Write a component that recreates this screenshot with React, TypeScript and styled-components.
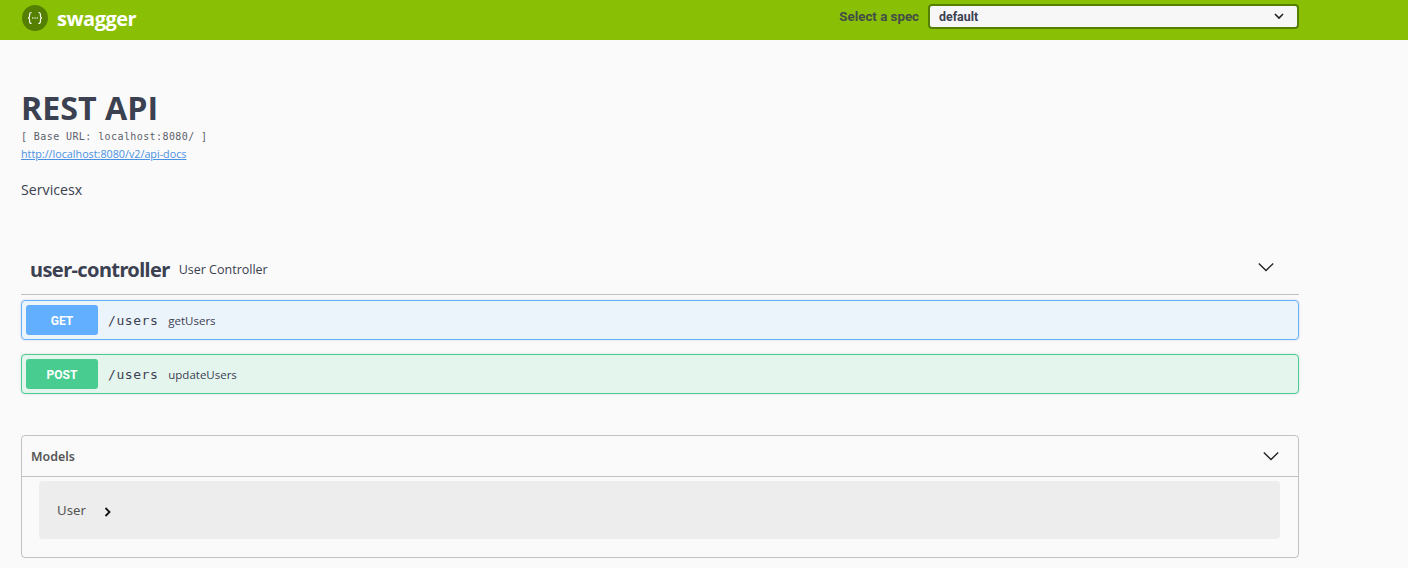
import styled, { createGlobalStyle } from 'styled-components';

const GlobalStyle = createGlobalStyle`
  html, body {
    margin: 0;
    padding: 0;
    background: #fafafa;
    overflow: hidden;
  }
  * {
    box-sizing: border-box;
  }
`;

const Page = styled.div`
  height: 568px;
  overflow: hidden;
  font-family: "Open Sans", sans-serif;
  color: #3b4151;
`;

const Topbar = styled.div`
  height: 40px;
  background: #89bf04;
  padding: 0 109px 0 22px;
  display: flex;
  align-items: center;
  justify-content: space-between;
`;

const Brand = styled.div`
  display: flex;
  align-items: center;
  gap: 9px;
  margin-top: -4px;
`;

const BrandName = styled.span`
  font-family: "Open Sans", sans-serif;
  font-size: 20px;
  font-weight: 700;
  letter-spacing: -0.5px;
  color: #fff;
`;

const SpecPicker = styled.div`
  display: flex;
  align-items: center;
  gap: 9px;
  margin-top: -7px;
`;

const SpecLabel = styled.span`
  font-family: Roboto, sans-serif;
  font-size: 13.3px;
  font-weight: 700;
  color: #3b4151;
  opacity: 0.9;
`;

const SpecSelect = styled.div`
  width: 371px;
  height: 25px;
  background: #f7f7f7;
  border: 2px solid #547f00;
  border-radius: 4px;
  padding: 0 13px 0 9px;
  display: flex;
  align-items: center;
  justify-content: space-between;
  font-family: Roboto, sans-serif;
  font-size: 12.4px;
  font-weight: 700;
`;

const Content = styled.div`
  width: 1278px;
  margin-left: 21px;
`;

const Info = styled.div`
  padding-top: 49px;
`;

const Title = styled.h1`
  margin: 0;
  font-size: 32.2px;
  line-height: 38px;
  font-weight: 700;
  color: #3b4151;
`;

const BaseUrl = styled.div`
  font-family: "DejaVu Sans Mono", monospace;
  font-size: 10px;
  line-height: 14px;
  letter-spacing: 0.41px;
  color: #5a5f6c;
  margin-top: 3px;
`;

const DocsLink = styled.a`
  display: block;
  font-size: 10.75px;
  line-height: 16px;
  margin-top: 2px;
  color: #4990e2;
  text-decoration: underline;
`;

const Description = styled.p`
  margin: 18px 0 0;
  font-size: 14.2px;
  line-height: 19px;
`;

const TagHeader = styled.div`
  margin-top: 47px;
  height: 49px;
  padding: 0 24px 2px 9px;
  border-bottom: 1px solid rgba(59, 65, 81, 0.3);
  display: flex;
  align-items: center;
  gap: 9px;
`;

const TagName = styled.span`
  font-family: "Noto Sans", sans-serif;
  font-size: 20px;
  font-weight: 700;
  letter-spacing: -0.6px;
`;

const TagDescription = styled.span`
  flex: 1;
  font-size: 12.5px;
  margin-top: 1px;
`;

const TagToggle = styled.span`
  display: flex;
  margin-top: -4px;
`;

const OpRow = styled.div<{ $border: string; $bg: string; $gap: number }>`
  height: 40px;
  margin-top: ${(p) => p.$gap}px;
  padding: 0 4px;
  display: flex;
  align-items: center;
  border: 1px solid ${(p) => p.$border};
  border-radius: 4px;
  background: ${(p) => p.$bg};
  box-shadow: 0 0 3px rgba(0, 0, 0, 0.12);
`;

const MethodBadge = styled.span<{ $color: string }>`
  width: 72px;
  height: 30px;
  padding-top: 1px;
  border-radius: 3px;
  background: ${(p) => p.$color};
  color: #fff;
  font-family: Roboto, sans-serif;
  font-size: 12px;
  font-weight: 700;
  display: flex;
  align-items: center;
  justify-content: center;
`;

const OpPath = styled.span`
  font-family: "DejaVu Sans Mono", monospace;
  font-size: 13px;
  padding-left: 10px;
  letter-spacing: 0.55px;
`;

const OpSummary = styled.span`
  font-size: 11.5px;
  padding-left: 10px;
`;

const ModelsBox = styled.div`
  margin-top: 41px;
  height: 123px;
  border: 1px solid rgba(59, 65, 81, 0.3);
  border-radius: 4px;
`;

const ModelsHeader = styled.div`
  height: 41px;
  padding: 0 18px 0 9px;
  border-bottom: 1px solid rgba(59, 65, 81, 0.3);
  display: flex;
  align-items: center;
  justify-content: space-between;
`;

const ModelsTitle = styled.span`
  font-family: "Noto Sans", sans-serif;
  font-size: 12.4px;
  font-weight: 600;
  color: #555;
`;

const ModelRow = styled.div`
  height: 58px;
  margin: 4px 18px 0 17px;
  padding: 0 18px;
  background: rgba(0, 0, 0, 0.05);
  border-radius: 4px;
  display: flex;
  align-items: center;
  gap: 18px;
`;

const ModelName = styled.span`
  font-family: "Noto Sans", sans-serif;
  font-size: 13.2px;
  color: #555;
`;

const ModelToggle = styled.span`
  display: flex;
  margin-top: 3px;
`;

const Chevron = ({ size }: { size: number }) => (
  <svg width={size} height={size} viewBox="0 0 20 20" fill="none" stroke="#222" strokeWidth="1.5">
    <path d="M2 6l8 8 8-8" />
  </svg>
);

const SmallChevronDown = () => (
  <svg width="10" height="7" viewBox="0 0 10 7" fill="none" stroke="#222" strokeWidth="1.6">
    <path d="M1 1l4 4 4-4" />
  </svg>
);

const SmallChevronRight = () => (
  <svg width="7" height="10" viewBox="0 0 7 10" fill="none" stroke="#111" strokeWidth="1.8">
    <path d="M1.5 1l4 4-4 4" />
  </svg>
);

const SwaggerLogo = () => (
  <svg width="26" height="26" viewBox="0 0 26 26">
    <circle cx="13" cy="13" r="13" fill="#547f00" />
    <g fill="none" stroke="#fff" strokeWidth="1.1">
      <path d="M9.6 7.5c-1.5 0-2 .7-2 2v1.8c0 1-.6 1.5-1.5 1.7.9.2 1.5.7 1.5 1.7v1.8c0 1.3.5 2 2 2" />
      <path d="M16.4 7.5c1.5 0 2 .7 2 2v1.8c0 1 .6 1.5 1.5 1.7-.9.2-1.5.7-1.5 1.7v1.8c0 1.3-.5 2-2 2" />
    </g>
    <g fill="#fff">
      <circle cx="10.8" cy="13" r=".7" />
      <circle cx="13" cy="13" r=".7" />
      <circle cx="15.2" cy="13" r=".7" />
    </g>
  </svg>
);

export default function App() {
  return (
    <Page>
      <GlobalStyle />
      <Topbar>
        <Brand>
          <SwaggerLogo />
          <BrandName>swagger</BrandName>
        </Brand>
        <SpecPicker>
          <SpecLabel>Select a spec</SpecLabel>
          <SpecSelect>
            default
            <SmallChevronDown />
          </SpecSelect>
        </SpecPicker>
      </Topbar>
      <Content>
        <Info>
          <Title>REST API</Title>
          <BaseUrl>[ Base URL: localhost:8080/ ]</BaseUrl>
          <DocsLink href="#">http://localhost:8080/v2/api-docs</DocsLink>
          <Description>Servicesx</Description>
        </Info>
        <TagHeader>
          <TagName>user-controller</TagName>
          <TagDescription>User Controller</TagDescription>
          <TagToggle>
            <Chevron size={18} />
          </TagToggle>
        </TagHeader>
        <OpRow $border="#61affe" $bg="#ebf3fb" $gap={5}>
          <MethodBadge $color="#61affe">GET</MethodBadge>
          <OpPath>/users</OpPath>
          <OpSummary>getUsers</OpSummary>
        </OpRow>
        <OpRow $border="#49cc90" $bg="#e4f5ee" $gap={14}>
          <MethodBadge $color="#49cc90">POST</MethodBadge>
          <OpPath>/users</OpPath>
          <OpSummary>updateUsers</OpSummary>
        </OpRow>
        <ModelsBox>
          <ModelsHeader>
            <ModelsTitle>Models</ModelsTitle>
            <Chevron size={18} />
          </ModelsHeader>
          <ModelRow>
            <ModelName>User</ModelName>
            <ModelToggle>
              <SmallChevronRight />
            </ModelToggle>
          </ModelRow>
        </ModelsBox>
      </Content>
    </Page>
  );
}
